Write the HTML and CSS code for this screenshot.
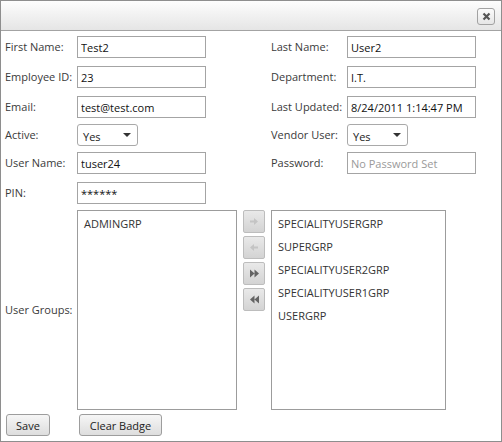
FILE: index.html
```html
<!DOCTYPE html>
<html lang="en">
<head>
<meta charset="utf-8">
<title>Edit User</title>
<link rel="stylesheet" href="styles.css">
</head>
<body>
<div class="dialog">
  <div class="titlebar">
    <button class="close" type="button" aria-label="Close">
      <svg width="9" height="9" viewBox="0 0 9 9"><path d="M1.5 1.5 L7.5 7.5 M7.5 1.5 L1.5 7.5" stroke="#555555" stroke-width="2.2" fill="none"/></svg>
    </button>
  </div>

  <div class="body">
    <div class="fields">
      <label class="lbl">First Name:</label>
      <div class="cell"><input class="txt" type="text" value="Test2"></div>
      <label class="lbl">Last Name:</label>
      <div class="cell"><input class="txt" type="text" value="User2"></div>

      <label class="lbl">Employee ID:</label>
      <div class="cell"><input class="txt" type="text" value="23"></div>
      <label class="lbl">Department:</label>
      <div class="cell"><input class="txt" type="text" value="I.T."></div>

      <label class="lbl">Email:</label>
      <div class="cell"><input class="txt" type="text" value="test@test.com"></div>
      <label class="lbl">Last Updated:</label>
      <div class="cell"><input class="txt" type="text" value="8/24/2011 1:14:47 PM"></div>

      <label class="lbl">Active:</label>
      <div class="cell"><div class="combo"><span class="combo-text">Yes</span><span class="caret"></span></div></div>
      <label class="lbl">Vendor User:</label>
      <div class="cell"><div class="combo"><span class="combo-text">Yes</span><span class="caret"></span></div></div>

      <label class="lbl">User Name:</label>
      <div class="cell"><input class="txt" type="text" value="tuser24"></div>
      <label class="lbl">Password:</label>
      <div class="cell"><input class="txt" type="text" placeholder="No Password Set"></div>

      <label class="lbl">PIN:</label>
      <div class="cell"><input class="txt pin" type="text" value="******"></div>
      <span></span>
      <span></span>
    </div>

    <div class="groups">
      <label class="lbl group-lbl">User Groups:</label>
      <div class="listbox list-left">
        <div class="item">ADMINGRP</div>
      </div>
      <div class="movers">
        <button class="mover" type="button" aria-label="Add selected">
          <svg width="10" height="9" viewBox="0 0 10 9"><path d="M1 3.5 H5 V1 L9 4.5 L5 8 V5.5 H1 Z" fill="#c4c4c4"/></svg>
        </button>
        <button class="mover" type="button" aria-label="Remove selected">
          <svg width="10" height="9" viewBox="0 0 10 9"><path d="M9 3.5 H5 V1 L1 4.5 L5 8 V5.5 H9 Z" fill="#c4c4c4"/></svg>
        </button>
        <button class="mover" type="button" aria-label="Add all">
          <svg width="11" height="9" viewBox="0 0 11 9"><path d="M1 0.5 L5.5 4.5 L1 8.5 Z M5.5 0.5 L10 4.5 L5.5 8.5 Z" fill="#646464"/></svg>
        </button>
        <button class="mover" type="button" aria-label="Remove all">
          <svg width="11" height="9" viewBox="0 0 11 9"><path d="M10 0.5 L5.5 4.5 L10 8.5 Z M5.5 0.5 L1 4.5 L5.5 8.5 Z" fill="#646464"/></svg>
        </button>
      </div>
      <div class="listbox list-right">
        <div class="item">SPECIALITYUSERGRP</div>
        <div class="item">SUPERGRP</div>
        <div class="item">SPECIALITYUSER2GRP</div>
        <div class="item">SPECIALITYUSER1GRP</div>
        <div class="item">USERGRP</div>
      </div>
    </div>

    <div class="actions">
      <button class="btn btn-save" type="button">Save</button>
      <button class="btn btn-clear" type="button">Clear Badge</button>
    </div>
  </div>
</div>
</body>
</html>
```

FILE: styles.css
```css
* {
  box-sizing: border-box;
}

html, body {
  margin: 0;
  padding: 0;
  background: #ffffff;
}

body {
  font-family: "Open Sans", "Noto Sans", sans-serif;
  font-size: 11px;
  color: #333333;
}

.dialog {
  width: 502px;
  height: 442px;
  border: 1px solid #8e8e8e;
  background: #ffffff;
  display: flex;
  flex-direction: column;
}

/* title strip with the close box */
.titlebar {
  height: 30px;
  flex: none;
  background: linear-gradient(#fdfdfd, #e5e5e5);
  border-bottom: 1px solid #a3a3a3;
  display: flex;
  justify-content: flex-end;
  align-items: flex-start;
  padding: 7px 6px 0 0;
}

.close {
  width: 18px;
  height: 17px;
  margin: 0;
  padding: 0;
  border: 1px solid #a2a2a2;
  border-radius: 3px;
  background: linear-gradient(#fbfbfb, #e6e6e6);
  display: flex;
  align-items: center;
  justify-content: center;
}

.body {
  padding: 5px 0 0 4px;
}

/* label / field pairs in two columns */
.fields {
  display: grid;
  grid-template-columns: 72px 194px 76px 129px;
  grid-template-rows: 30px 30px 28px 28px 30px 28px;
  align-items: start;
}

.lbl {
  height: 22px;
  line-height: 22px;
  white-space: nowrap;
  color: #3a3a3a;
}

.txt {
  display: block;
  width: 129px;
  height: 22px;
  margin: 0;
  padding: 0 3px;
  border: 1px solid #a4a4a4;
  border-radius: 0;
  font: inherit;
  color: #111111;
  background: #ffffff;
  outline: none;
}

.txt::placeholder {
  color: #9a9a9a;
  opacity: 1;
}

.combo {
  position: relative;
  width: 61px;
  height: 22px;
  border: 1px solid #a9a9a9;
  border-radius: 3px;
  background: #ffffff;
  padding: 2px 0 0 5px;
  line-height: 20px;
  color: #222222;
}

.caret {
  position: absolute;
  right: 6px;
  top: 8px;
  width: 0;
  height: 0;
  border-left: 4px solid transparent;
  border-right: 4px solid transparent;
  border-top: 4px solid #333333;
}

/* dual list picker */
.groups {
  display: flex;
  align-items: flex-start;
}

.group-lbl {
  width: 72px;
  flex: none;
  align-self: center;
}

.listbox {
  flex: none;
  height: 200px;
  border: 1px solid #9c9c9c;
  background: #ffffff;
  padding: 1px 0 0 6px;
}

.list-left {
  width: 160px;
}

.list-right {
  width: 175px;
}

.item {
  height: 23px;
  line-height: 23px;
  color: #333333;
  white-space: nowrap;
}

.movers {
  flex: none;
  display: flex;
  flex-direction: column;
  gap: 3px;
  margin: 0 6px;
}

.mover {
  width: 22px;
  height: 23px;
  margin: 0;
  padding: 0;
  border: 1px solid #bdbdbd;
  border-radius: 2px;
  background: linear-gradient(#e9e9e9, #d3d3d3);
  display: flex;
  align-items: center;
  justify-content: center;
}

/* footer buttons */
.actions {
  display: flex;
  gap: 29px;
  padding: 4px 0 0 1px;
}

.btn {
  height: 22px;
  margin: 0;
  padding: 0;
  border: 1px solid #9d9d9d;
  border-radius: 3px;
  background: linear-gradient(#f6f6f6, #dddddd);
  font: inherit;
  color: #222222;
}

.btn-save {
  width: 44px;
}

.btn-clear {
  width: 83px;
}
```
